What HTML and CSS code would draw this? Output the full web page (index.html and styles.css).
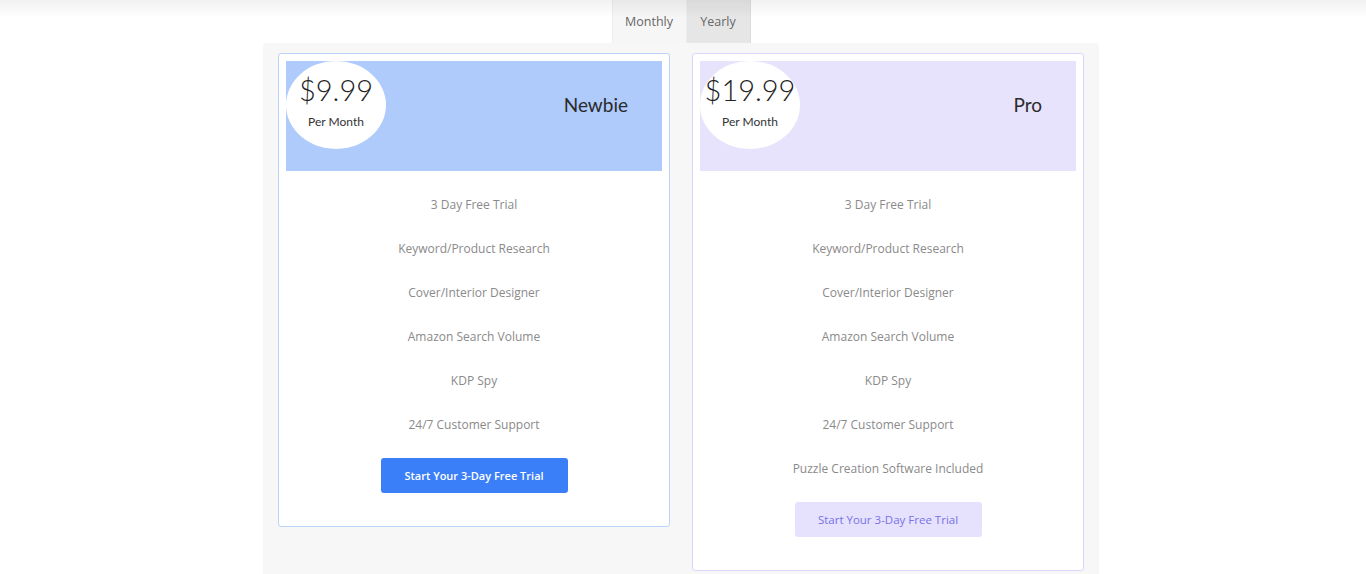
FILE: index.html
```html
<!DOCTYPE html>
<html lang="en">
<head>
    <meta charset="UTF-8">
    <meta name="viewport" content="width=device-width, initial-scale=1.0">
    <title>Pricing</title>
    <link rel="stylesheet" href="styles.css">
</head>
<body>
    <div class="page">
        <div class="tabs">
            <button class="tab active">Monthly</button>
            <button class="tab">Yearly</button>
        </div>

        <div class="plans">
            <div class="plan newbie">
                <div class="plan-head">
                    <div class="price">
                        <span class="amount">$9.99</span>
                        <span class="period">Per Month</span>
                    </div>
                    <span class="plan-name">Newbie</span>
                </div>
                <ul class="features">
                    <li>3 Day Free Trial</li>
                    <li>Keyword/Product Research</li>
                    <li>Cover/Interior Designer</li>
                    <li>Amazon Search Volume</li>
                    <li>KDP Spy</li>
                    <li>24/7 Customer Support</li>
                </ul>
                <button class="trial">Start Your 3-Day Free Trial</button>
            </div>

            <div class="plan pro">
                <div class="plan-head">
                    <div class="price">
                        <span class="amount">$19.99</span>
                        <span class="period">Per Month</span>
                    </div>
                    <span class="plan-name">Pro</span>
                </div>
                <ul class="features">
                    <li>3 Day Free Trial</li>
                    <li>Keyword/Product Research</li>
                    <li>Cover/Interior Designer</li>
                    <li>Amazon Search Volume</li>
                    <li>KDP Spy</li>
                    <li>24/7 Customer Support</li>
                    <li>Puzzle Creation Software Included</li>
                </ul>
                <button class="trial">Start Your 3-Day Free Trial</button>
            </div>
        </div>
    </div>
</body>
</html>
```

FILE: styles.css
```css
body {
    margin: 0;
    background-color: #FFFFFF;
    font-family: 'Open Sans', sans-serif;
    color: #333333;
    overflow: hidden;
}

/* soft shadow of the fixed header above the page */
body::before {
    content: "";
    position: fixed;
    top: 0;
    left: 0;
    right: 0;
    height: 18px;
    background: linear-gradient(rgba(0, 0, 0, 0.055), rgba(0, 0, 0, 0));
    pointer-events: none;
    z-index: 5;
}

.page {
    display: flex;
    flex-direction: column;
    align-items: center;
    padding-right: 4px;
}

.tabs {
    display: flex;
    height: 43px;
}

.tab {
    width: 64px;
    border: none;
    padding: 0;
    font-family: 'Open Sans', sans-serif;
    font-size: 12.5px;
    color: #666666;
    background-color: #E6E6E6;
    border-right: 1px solid #DCDCDC;
    cursor: pointer;
}

.tab.active {
    width: 75px;
    background-color: #F6F6F6;
    border-left: 1px solid #EEEEEE;
    border-right: 1px solid #EEEEEE;
}

.plans {
    display: flex;
    align-items: flex-start;
    gap: 22px;
    width: 836px;
    box-sizing: border-box;
    padding: 10px 15px 40px;
    background-color: #F7F7F7;
    border-radius: 4px;
}

.plan {
    flex: 1;
    background-color: #FFFFFF;
    border: 1px solid #BBD2FB;
    border-radius: 3px;
    padding: 7px 7px 33px;
    display: flex;
    flex-direction: column;
    align-items: center;
}

.plan.pro {
    border-color: #DAD5FA;
}

.plan-head {
    align-self: stretch;
    height: 110px;
    display: flex;
    align-items: flex-start;
    justify-content: space-between;
    background-color: #AECBFC;
}

.pro .plan-head {
    background-color: #E7E3FC;
}

.price {
    width: 100px;
    height: 88px;
    border-radius: 50%;
    background-color: #FFFFFF;
    display: flex;
    flex-direction: column;
    align-items: center;
    padding-top: 12px;
    box-sizing: border-box;
    font-family: 'Lato', sans-serif;
    color: #222222;
}

.price .amount {
    font-size: 29px;
    font-weight: 300;
    line-height: 34px;
}

.price .period {
    font-size: 12px;
    color: #333333;
    margin-top: 7px;
}

.plan-name {
    font-family: 'Lato', sans-serif;
    font-size: 19px;
    color: #2A2A2A;
    margin: 32px 34px 0 0;
}

.features {
    list-style: none;
    margin: 12px 0 11px;
    padding: 0;
    text-align: center;
}

.features li {
    height: 44px;
    line-height: 44px;
    font-size: 12px;
    color: #8A8A8A;
}

.trial {
    width: 187px;
    height: 35px;
    border: none;
    border-radius: 3px;
    background-color: #3A7EF8;
    color: #FFFFFF;
    font-family: 'Open Sans', sans-serif;
    font-size: 11px;
    font-weight: 600;
    cursor: pointer;
}

.pro .trial {
    background-color: #E6E2FD;
    color: #7871E8;
    font-weight: 400;
    font-size: 11.5px;
}
```
